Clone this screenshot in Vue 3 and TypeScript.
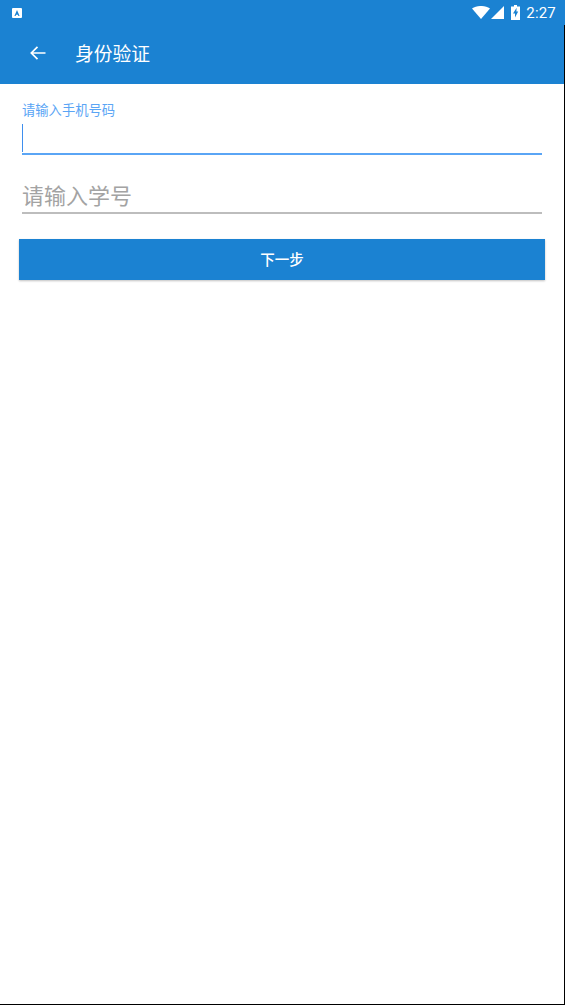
<script setup lang="ts">
const title = '身份验证'
</script>

<template>
  <div class="screen">
    <header class="appbar">
      <div class="statusbar">
        <svg class="a-icon" width="10" height="10" viewBox="0 0 10 10">
          <rect x="0" y="0" width="10" height="10" rx="1" fill="#fff" />
          <path d="M5 2 L7.6 8 H6.4 L5.9 6.7 H4.1 L3.6 8 H2.4 Z" fill="#1b82d2" />
        </svg>
        <div class="status-right">
          <svg width="18" height="13" viewBox="0 0 18 13">
            <path d="M0 2.6 C5 -0.9 13 -0.9 18 2.6 L9 13 Z" fill="#fff" />
          </svg>
          <svg width="13" height="13" viewBox="0 0 13 13">
            <path d="M13 0 V13 H0 Z" fill="#fff" />
          </svg>
          <svg class="battery" width="9" height="15" viewBox="0 0 9 15">
            <path d="M3 0 H6 V1.5 H9 V15 H0 V1.5 H3 Z" fill="#fff" />
            <path d="M5.6 2.8 L2 8.6 H4 V12.6 L7.2 6.6 H5.4 Z" fill="#1b82d2" />
          </svg>
          <span class="time">2:27</span>
        </div>
      </div>
      <div class="toolbar">
        <svg class="back" width="18" height="18" viewBox="0 0 18 18">
          <path d="M16.5 9 H2.5 M8.5 2.8 L2.3 9 L8.5 15.2" fill="none" stroke="#fff" stroke-width="1.7" />
        </svg>
        <span class="title">{{ title }}</span>
      </div>
    </header>

    <main class="content">
      <div class="field focused">
        <label class="float-label">请输入手机号码</label>
        <div class="input-line"><span class="caret"></span></div>
      </div>
      <div class="field idle">
        <div class="placeholder">请输入学号</div>
      </div>
      <button class="next" type="button">下一步</button>
    </main>
  </div>
</template>

<style scoped>
.screen {
  width: 565px;
  height: 1005px;
  box-sizing: border-box;
  display: flex;
  flex-direction: column;
  background: #fff;
  font-family: Roboto, "Noto Sans CJK SC", sans-serif;
  overflow: hidden;
}
.appbar {
  height: 84px;
  flex: none;
  background: #1b82d2;
  color: #fff;
}
.statusbar {
  height: 25px;
  display: flex;
  align-items: center;
  justify-content: space-between;
  padding: 0 9px 0 12px;
}
.status-right {
  display: flex;
  align-items: center;
  gap: 1px;
}
.battery {
  margin-left: 6px;
}
.time {
  margin-left: 5px;
  font-size: 15px;
  letter-spacing: 0.2px;
}
.toolbar {
  height: 59px;
  display: flex;
  align-items: center;
  padding: 0 0 4px 29px;
  box-sizing: border-box;
  border-right: 1px solid #000;
}
.title {
  margin-left: 28px;
  font-size: 18.75px;
  font-weight: 400;
}
.content {
  flex: 1;
  border-right: 1px solid #000;
  border-bottom: 1px solid #000;
  padding: 0 20px 0 19px;
  display: flex;
  flex-direction: column;
}
.field {
  margin: 0 0 0 3px;
  width: 520px;
}
.focused {
  height: 71px;
  display: flex;
  flex-direction: column;
  border-bottom: 2px solid #5aa5f5;
  box-sizing: border-box;
}
.float-label {
  margin-top: 18px;
  font-size: 13.3px;
  line-height: 18px;
  color: #5aa5f5;
}
.input-line {
  flex: 1;
  padding-top: 4px;
}
.caret {
  display: block;
  width: 1px;
  height: 28px;
  background: #3f8fee;
}
.idle {
  margin-top: 26px;
  height: 33px;
  border-bottom: 2px solid #bdbdbd;
  box-sizing: border-box;
}
.placeholder {
  font-size: 22px;
  line-height: 28px;
  padding-top: 2px;
  color: #a3a3a3;
}
.next {
  margin-top: 25px;
  width: 526px;
  height: 41px;
  border: 0;
  padding: 0 0 2px;
  border-radius: 0;
  background: #1b82d2;
  color: #fff;
  font: inherit;
  font-size: 14.5px;
  font-weight: 500;
  box-shadow: 0 1px 2px rgba(0, 0, 0, 0.25);
}
</style>
